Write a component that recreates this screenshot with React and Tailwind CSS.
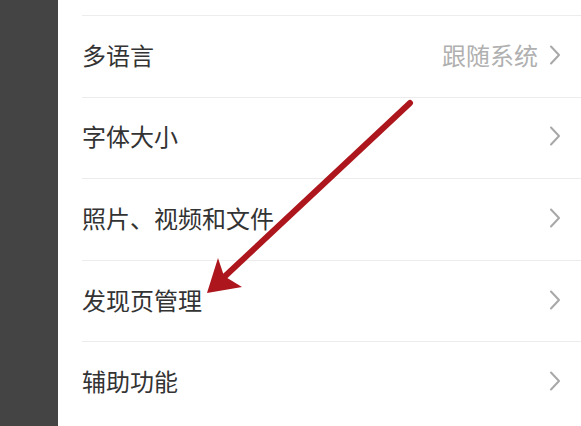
const rows = [
  { label: '多语言', value: '跟随系统' },
  { label: '字体大小' },
  { label: '照片、视频和文件' },
  { label: '发现页管理' },
  { label: '辅助功能' },
];

const Chevron = () => (
  <svg width="12" height="20" viewBox="0 0 12 20" className="shrink-0">
    <path d="M2 1.5 L10 10 L2 18.5" fill="none" stroke="#a8a8a8" strokeWidth="2" strokeLinecap="round" strokeLinejoin="round" />
  </svg>
);

export default function App() {
  return (
    <div
      className="relative flex w-[581px] h-[426px] overflow-hidden bg-white"
      style={{ fontFamily: '"Noto Sans CJK SC", "Noto Sans", sans-serif' }}
    >
      <div className="w-[58px] shrink-0 bg-[#444444]" />
      <div className="flex-1 pl-[24px] pt-[15px]">
        {rows.map((r) => (
          <div
            key={r.label}
            className="flex h-[81.6px] items-center justify-between border-t border-[#ececec] pr-[20px] pb-[3px]"
          >
            <span className="text-[24px] text-[#333333]">{r.label}</span>
            <div className="flex items-center gap-[11px]">
              {r.value && <span className="text-[24px] text-[#b0b0b0]">{r.value}</span>}
              <Chevron />
            </div>
          </div>
        ))}
      </div>

      <svg className="absolute inset-0 pointer-events-none" width="581" height="426" viewBox="0 0 581 426">
        <defs>
          <filter id="glow" x="-10%" y="-10%" width="120%" height="120%">
            <feGaussianBlur stdDeviation="0.6" />
          </filter>
        </defs>
        <g filter="url(#glow)">
          <line x1="410" y1="103" x2="222" y2="279" stroke="#ad151b" strokeWidth="6" strokeLinecap="round" />
          <polygon points="207,293 218,258 224,276 242,287" fill="#ad151b" />
        </g>
      </svg>
    </div>
  );
}
